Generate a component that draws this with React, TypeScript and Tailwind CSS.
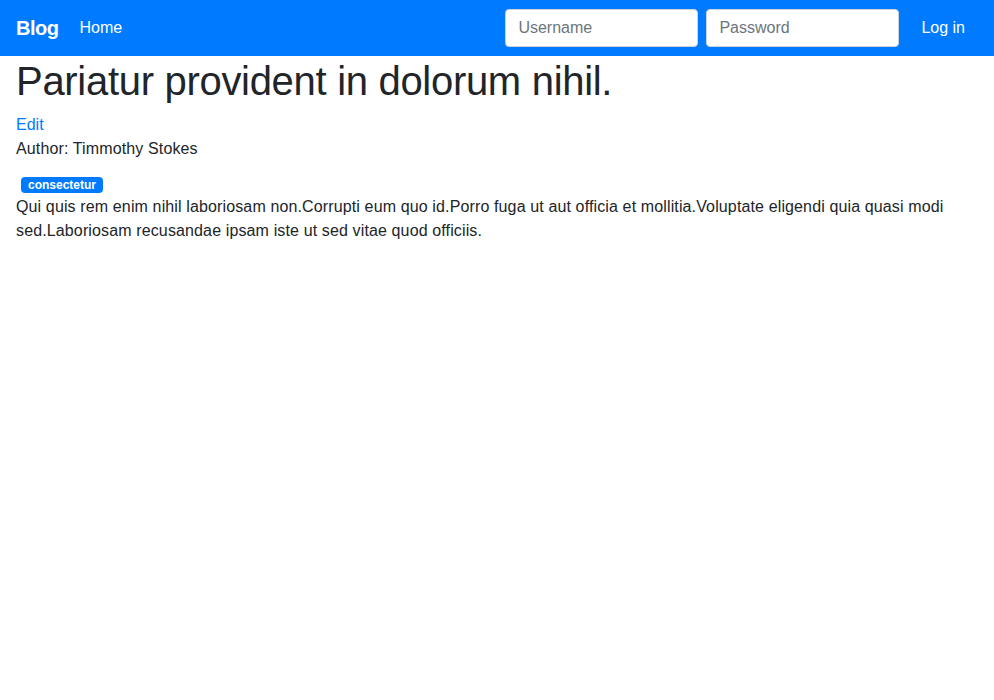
import React from 'react';

export default function App() {
  return (
    <div className="min-h-[700px] bg-white text-[#212529] text-base leading-6" style={{ fontFamily: '"Liberation Sans", Arial, sans-serif' }}>
      <nav className="flex h-14 items-center bg-[#007bff] px-4">
        <a className="mr-[13px] text-xl font-bold leading-[30px] text-white tracking-[-0.5px]" href="#">Blog</a>
        <a className="px-2 py-2 text-white" href="#">Home</a>
        <form className="ml-auto flex items-center" onSubmit={(e) => e.preventDefault()}>
          <input
            className="mr-2 h-[38px] w-[193px] rounded border border-[#ced4da] bg-white px-3 text-[#495057] placeholder:text-[#6c757d] outline-none"
            placeholder="Username"
          />
          <input
            type="password"
            className="mr-2 h-[38px] w-[193px] rounded border border-[#ced4da] bg-white px-3 text-[#495057] placeholder:text-[#6c757d] outline-none"
            placeholder="Password"
          />
          <button className="h-[38px] pl-[14px] pr-[13px] text-white" type="submit">Log in</button>
        </form>
      </nav>
      <div className="px-4">
        <h1 className="mb-2 pt-px text-[40px] leading-[48px] tracking-[-0.3px]">Pariatur provident in dolorum nihil.</h1>
        <a className="block text-[#007bff]" href="#">Edit</a>
        <p className="mb-4 tracking-[0.13px]">Author: Timmothy Stokes</p>
        <div className="h-[18px]">
          <span className="ml-[5px] inline-block rounded bg-[#007bff] px-[7px] py-[2px] align-top text-xs font-bold leading-3 text-white">consectetur</span>
        </div>
        <p className="tracking-[0.13px]">
          Qui quis rem enim nihil laboriosam non.Corrupti eum quo id.Porro fuga ut aut officia et mollitia.Voluptate eligendi quia quasi modi sed.Laboriosam recusandae ipsam iste ut sed vitae quod officiis.
        </p>
      </div>
    </div>
  );
}
